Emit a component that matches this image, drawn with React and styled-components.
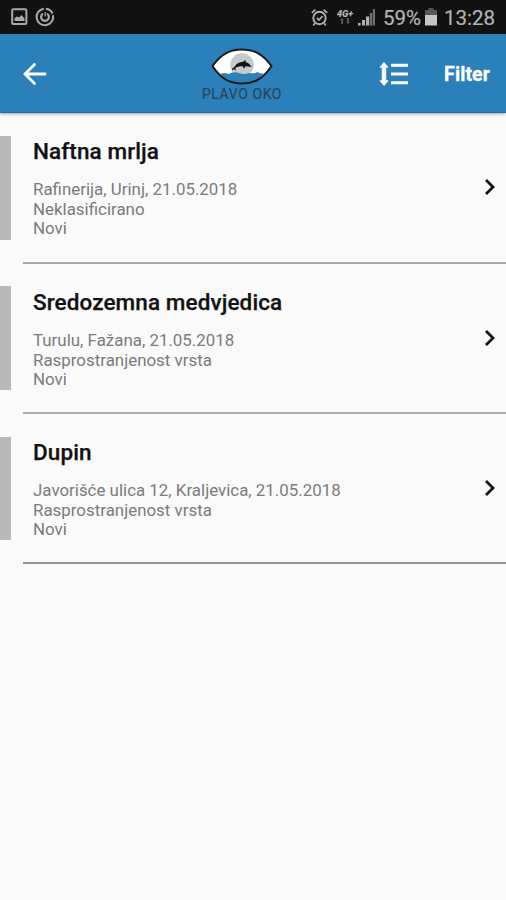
import React from "react";
import styled, { createGlobalStyle } from "styled-components";

const GlobalStyle = createGlobalStyle`
  * { box-sizing: border-box; }
  body { margin: 0; background: #fafafa; font-family: Roboto, sans-serif; }
`;

const Screen = styled.main`
  width: 100%;
  min-height: 900px;
  background: #fafafa;
  overflow: hidden;
`;

const StatusBar = styled.div`
  height: 34px;
  background: #121212;
  color: #b4b4b4;
  display: flex;
  align-items: center;
  justify-content: space-between;
  padding: 0 11px;
`;

const StatusGroup = styled.div`
  display: flex;
  align-items: center;
  gap: ${(p) => p.$gap || 0}px;
  height: 34px;
  svg { display: block; }
`;

const StatusText = styled.span`
  font-size: 20.5px;
  line-height: 34px;
  margin-left: ${(p) => p.$gap}px;
  width: ${(p) => p.$width}px;
  white-space: nowrap;
  padding-top: 1px;
  -webkit-text-stroke: 0.2px #b4b4b4;
`;

const Network = styled.div`
  display: flex;
  flex-direction: column;
  align-items: center;
  width: 18px;
  margin: 0 4px 0 8px;
  font-size: 9.5px;
  font-weight: 900;
  font-style: italic;
  line-height: 8px;
`;

const Header = styled.header`
  height: 79px;
  background: #2b80ba;
  border-bottom: 1px solid #216fa6;
  box-shadow: 0 1px 3px rgba(0, 0, 0, 0.35);
  display: grid;
  grid-template-columns: 202px 80px 1fr;
  color: #fff;
`;

const BackButton = styled.button`
  border: 0;
  background: none;
  padding: 2px 0 0 22px;
  display: flex;
  align-items: center;
`;

const Logo = styled.div`
  display: flex;
  flex-direction: column;
  align-items: center;
  padding-top: 14px;
  svg { display: block; }
`;

const LogoText = styled.span`
  color: #29455a;
  font-size: 14px;
  line-height: 16px;
  white-space: nowrap;
  letter-spacing: 0.6px;
  -webkit-text-stroke: 0.2px #29455a;
`;

const Actions = styled.div`
  display: flex;
  align-items: center;
  justify-content: flex-end;
  gap: 35px;
  padding: 2px 16px 0 0;
`;

const FilterButton = styled.button`
  border: 0;
  background: none;
  padding: 1px 0 0;
  color: #fff;
  font: 700 19.5px/24px Roboto, sans-serif;
  letter-spacing: 0.1px;
  -webkit-text-stroke: 0.3px #fff;
`;

const List = styled.ul`
  list-style: none;
  margin: 0;
  padding: 0;
`;

const Row = styled.li`
  height: 150.4px;
  display: grid;
  grid-template-columns: 11px 12px 1fr;
  &:first-child { height: 151px; }
  &:nth-child(2) { height: 150px; }
`;

const Marker = styled.div`
  width: 11px;
  height: 103.5px;
  margin-top: ${(p) => p.$top}px;
  background: #b9b9b9;
`;

const Content = styled.div`
  grid-column: 3;
  display: flex;
  justify-content: space-between;
  border-bottom: 2px solid ${(p) => p.$line};
  padding: 22px 10.5px 0 10px;
`;

const Title = styled.h2`
  margin: 0 0 13px;
  font-size: 22.5px;
  font-weight: 500;
  line-height: 32px;
  color: #111;
  letter-spacing: 0.1px;
  -webkit-text-stroke: 0.25px #111;
`;

const Detail = styled.p`
  margin: 0;
  font-size: 16.9px;
  line-height: 19.6px;
  color: #7b7b7b;
  white-space: nowrap;
`;

const Chevron = styled.svg`
  display: block;
  margin-top: 43px;
`;

const reports = [
  { title: "Naftna mrlja", place: "Rafinerija, Urinj, 21.05.2018", kind: "Neklasificirano", line: "#a9a9a9", top: 23 },
  { title: "Sredozemna medvjedica", place: "Turulu, Fažana, 21.05.2018", kind: "Rasprostranjenost vrsta", line: "#adadad", top: 22.4 },
  { title: "Dupin", place: "Javorišće ulica 12, Kraljevica, 21.05.2018", kind: "Rasprostranjenost vrsta", line: "#949494", top: 22.8 },
];

function PictureIcon() {
  return (
    <svg width="17" height="18" viewBox="0 0 17 18">
      <rect x="1.2" y="1.2" width="14.2" height="14.8" rx="1" fill="none" stroke="#aaa" strokeWidth="2" />
      <path d="M3.5 13V10l2.5-1.5 2 1 2.5-2.5 3 3.5V13Z" fill="#aaa" />
    </svg>
  );
}

function SwirlIcon() {
  return (
    <svg width="20" height="20" viewBox="0 0 20 20" fill="none" stroke="#aaa">
      <path d="M8.8 1.7A8.3 8.3 0 1 0 18 8.2" strokeWidth="2" />
      <path d="M10.8 1.7A8.3 8.3 0 0 1 17.6 6.5" strokeWidth="2" />
      <path d="M8 6.6A3.9 3.9 0 1 0 12 6.6" strokeWidth="2.2" />
      <path d="M10.2 5v4.6" strokeWidth="1.2" />
    </svg>
  );
}

function AlarmIcon() {
  return (
    <svg width="17" height="19" viewBox="0 0 17 19" fill="none" stroke="#b0b0b0">
      <circle cx="8.5" cy="10" r="6.2" strokeWidth="1.9" />
      <path d="m5.8 9.8 2.2 2.2 3.6-3.8M.8 4.8 4.4 1.6M16.2 4.8l-3.6-3.2M3.8 15.2 2.3 17.5M13.2 15.2l1.5 2.3" strokeWidth="1.7" />
    </svg>
  );
}

function SignalIcon() {
  return (
    <svg width="18" height="18" viewBox="0 0 18 18">
      <path d="M0 15h2.6v2.5H0ZM4 12h3v5.5H4ZM8 8.5h3.2v9H8Z" fill="#b0b0b0" />
      <path d="M11.8 5h2.4v12.5h-2.4ZM14.8 1h2.2v16.5h-2.2Z" fill="#707070" />
    </svg>
  );
}

function BatteryIcon() {
  return (
    <svg width="12" height="18" viewBox="0 0 12 18">
      <path d="M3.5 0h5v2H12v5H0V2h3.5Z" fill="#575757" />
      <path d="M0 7h12v10.5H0Z" fill="#c6c6c6" />
    </svg>
  );
}

function EyeLogo() {
  return (
    <svg width="62" height="38" viewBox="0 0 62 38">
      <path d="M1.5 18C11 5 20 1.5 31 1.5S51 5 60.5 18C52 31 43 35.5 31 35.5S10 31 1.5 18Z" fill="#fff" />
      <circle cx="31" cy="17" r="11.8" fill="#c7cacc" />
      <path d="M9.5 26q4-2 8 0 5-3 10-1 6 2 10 0 6 1 9-1 3 2 6 1.5C46 34 39 35 31 35S16 33 9.5 26Z" fill="#2b80ba" />
      <path d="M21 22.5c0-2 .8-3 2.3-3.2 1.8-3.7 5-5.4 8.7-5.5l2.6-1.8.2 2.2c2.2.6 4 1.8 4.6 3.3l2 1-2.6.2-4.4-.4-1.2 2.4-1.5-2.5c-3-.1-5.7.5-7.5 2l1 2.2-2.2-1.2Z" fill="#101417" />
      <path d="M1.5 18C11 5 20 1.5 31 1.5S51 5 60.5 18C52 31 43 35.5 31 35.5S10 31 1.5 18Z" fill="none" stroke="#171a18" strokeWidth="2" />
    </svg>
  );
}

function SortIcon() {
  return (
    <svg width="30" height="26" viewBox="0 0 30 26" fill="#fff">
      <path d="M5 1.4 9 6.3H6.8v13.4H9L5 24.6 1 19.7h2.2V6.3H1Z" stroke="#fff" strokeWidth="0.8" strokeLinejoin="round" />
      <path d="M12 2.8h17v3H12ZM12 11.5h17v3H12ZM12 20.2h17v3H12Z" />
    </svg>
  );
}

function Report({ report }) {
  return (
    <Row>
      <Marker $top={report.top} />
      <Content $line={report.line}>
        <div>
          <Title>{report.title}</Title>
          <Detail>{report.place}</Detail>
          <Detail>{report.kind}</Detail>
          <Detail>Novi</Detail>
        </div>
        <Chevron width="12" height="18" viewBox="0 0 12 18">
          <path d="m2 2 7 7-7 7" fill="none" stroke="#111" strokeWidth="2.8" />
        </Chevron>
      </Content>
    </Row>
  );
}

export default function App() {
  return (
    <>
      <GlobalStyle />
      <Screen>
        <StatusBar>
          <StatusGroup $gap={7}>
            <PictureIcon />
            <SwirlIcon />
          </StatusGroup>
          <StatusGroup>
            <AlarmIcon />
            <Network>
              4G+
              <svg width="10" height="6" viewBox="0 0 10 6" fill="#555">
                <path d="M1 2h2v4H1ZM0 2l2-2 2 2ZM7 0h2v4H7ZM6 4h4L8 6Z" />
              </svg>
            </Network>
            <SignalIcon />
            <StatusText $gap={7} $width={42}>59%</StatusText>
            <BatteryIcon />
            <StatusText $gap={7} $width={51}>13:28</StatusText>
          </StatusGroup>
        </StatusBar>
        <Header>
          <BackButton aria-label="Back">
            <svg width="25" height="24" viewBox="0 0 25 24" fill="none" stroke="#fff" strokeWidth="2.8" strokeLinecap="round">
              <path d="M23 12H3M12.5 2.5 3 12l9.5 9.5" />
            </svg>
          </BackButton>
          <Logo>
            <EyeLogo />
            <LogoText>PLAVO OKO</LogoText>
          </Logo>
          <Actions>
            <SortIcon />
            <FilterButton>Filter</FilterButton>
          </Actions>
        </Header>
        <List>
          {reports.map((r) => (
            <Report key={r.title} report={r} />
          ))}
        </List>
      </Screen>
    </>
  );
}
